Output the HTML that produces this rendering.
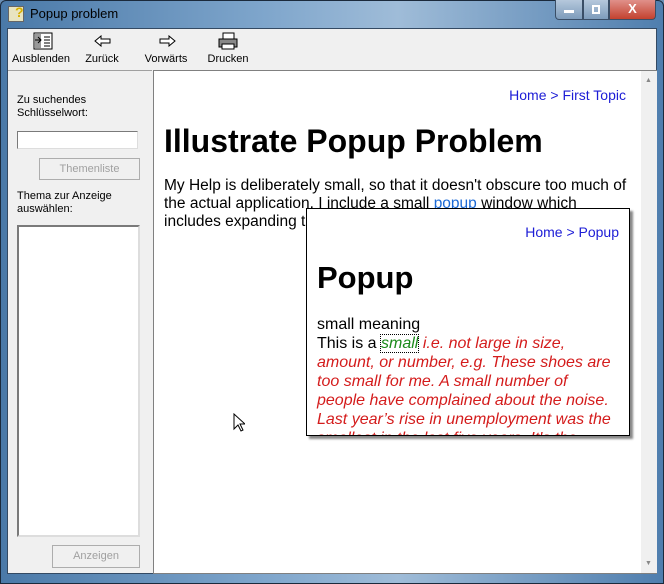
<!DOCTYPE html>
<html><head><style>
*{margin:0;padding:0;box-sizing:border-box}
body{width:664px;height:584px;overflow:hidden;background:#6a8fb5;font-family:"Liberation Sans",sans-serif;position:relative}
.frame{position:absolute;left:0;top:0;width:664px;height:584px;background:linear-gradient(90deg,#4a79a8 0%,#7fa6cc 40%,#9fbcd8 60%,#4f7eae 100%);border-radius:6px 6px 0 0;border:1px solid #1b2a3c}
.title{position:absolute;left:30px;top:6px;font-size:13px;color:#000}
.ico{position:absolute;left:8px;top:6px;width:16px;height:16px;background:#e8e4c0;border:1px solid #666}
.ico b{position:absolute;left:6px;top:-3px;color:#d8b000;font-size:14px;font-weight:bold}
.btns{position:absolute;top:0;left:555px;height:20px;display:flex}
.b{height:20px;border:1px solid #3a4e66;border-top:none;background:linear-gradient(#b5c8dc,#7e9cbb);}
.client{position:absolute;left:7px;top:28px;width:650px;height:546px;background:#f0f0f0;border:1px solid #344a63}
.tb{position:absolute;top:0;font-size:11px;color:#000;text-align:center}
.tb span{display:block;margin-top:24px}
.left{position:absolute;left:0;top:41px;width:144px;height:505px;border-top:1px solid #a0a0a0;font-size:11px}
.content{position:absolute;left:145px;top:41px;width:504px;height:504px;border:1px solid #808080;border-right:none;background:#fff}
.sb{position:absolute;right:0;top:0;width:16px;height:502px;background:#f0f0f0}
.lbl{position:absolute;left:9px;font-size:11px;line-height:13px;color:#000}
.dis{position:absolute;border:1px solid #adadad;background:#f0f0f0;color:#a0a0a0;font-size:11px;text-align:center;line-height:20px}
a{color:#1c1cd6;text-decoration:none}
</style></head><body>
<div class="frame"></div>
<div class="ico"><b>?</b></div>
<div class="title">Popup problem</div>
<div class="btns">
<div class="b" style="width:28px;border-radius:0 0 0 4px"><div style="margin:10px 8px 0;height:3px;background:#fff"></div></div>
<div class="b" style="width:26px"><div style="margin:5px 8px 0;height:9px;border:2px solid #fff"></div></div>
<div class="b" style="width:47px;background:linear-gradient(#e0908a,#c3422f);border-radius:0 0 4px 0;color:#fff;text-align:center;font-weight:bold;font-size:13px;line-height:18px">X</div>
</div>
<div class="client">
 <div class="tb" style="left:3px;width:60px"><svg style="position:absolute;left:22px;top:3px" width="20" height="18"><rect x="1" y="1" width="18" height="16" fill="#fff" stroke="#000"/><rect x="2" y="2" width="6" height="14" fill="#999"/><path d="M2 8h6M5 5l3 3-3 3" stroke="#000" fill="none"/><path d="M11 5h6M11 8h6M11 11h6M11 14h6" stroke="#000"/></svg><span>Ausblenden</span></div>
 <div class="tb" style="left:70px;width:48px"><svg style="position:absolute;left:16px;top:6px" width="18" height="12"><path d="M1 6l6-5v3h9v4h-9v3z" fill="#fff" stroke="#000"/></svg><span>Zurück</span></div>
 <div class="tb" style="left:134px;width:48px"><svg style="position:absolute;left:16px;top:6px" width="18" height="12"><path d="M17 6l-6-5v3h-9v4h9v3z" fill="#fff" stroke="#000"/></svg><span>Vorwärts</span></div>
 <div class="tb" style="left:196px;width:48px"><svg style="position:absolute;left:14px;top:3px" width="20" height="18"><rect x="5" y="1" width="11" height="7" fill="#fff" stroke="#000"/><rect x="1" y="7" width="18" height="8" fill="#888" stroke="#000"/><rect x="4" y="12" width="12" height="5" fill="#fff" stroke="#000"/></svg><span>Drucken</span></div>
 <div class="left">
  <div class="lbl" style="top:23px">Zu suchendes<br>Schlüsselwort:</div>
  <div style="position:absolute;left:9px;top:60px;width:121px;height:18px;background:#fff;border:1px solid #7a7a7a;border-right-color:#ddd;border-bottom-color:#ddd"></div>
  <div class="dis" style="left:31px;top:87px;width:101px;height:22px">Themenliste</div>
  <div class="lbl" style="top:119px">Thema zur Anzeige<br>auswählen:</div>
  <div style="position:absolute;left:9px;top:154px;width:123px;height:312px;background:#fff;border:2px solid #7a7a7a;border-right-color:#ddd;border-bottom-color:#ddd"></div>
  <div class="dis" style="left:44px;top:474px;width:88px;height:23px">Anzeigen</div>
 </div>
 <div class="content">
  <div class="sb"><div style="position:absolute;left:4px;top:6px;font-size:7px;color:#888">▲</div><div style="position:absolute;left:4px;bottom:6px;font-size:7px;color:#888">▼</div></div>
  <div style="position:absolute;right:31px;top:16px;font-size:14px"><a>Home &gt; First Topic</a></div>
  <div style="position:absolute;left:10px;top:52px;font-size:32px;font-weight:bold;color:#000">Illustrate Popup Problem</div>
  <div style="position:absolute;left:10px;top:106px;width:470px;font-size:15.5px;line-height:18px;color:#000">My Help is deliberately small, so that it doesn't obscure too much of the actual application. I include a small <a style="color:#1c6ad6;text-decoration:underline">popup</a> window which includes expanding text.</div>
  <div style="position:absolute;left:152px;top:137px;width:324px;height:228px;background:#fff;border:1px solid #000;box-shadow:3px 3px 2px #888;overflow:hidden">
   <div style="position:absolute;right:10px;top:15px;font-size:14px"><a>Home &gt; Popup</a></div>
   <div style="position:absolute;left:10px;top:51px;font-size:31px;font-weight:bold">Popup</div>
   <div style="position:absolute;left:10px;top:106px;width:297px;font-size:16px;line-height:19px">small meaning<br>This is a <i style="color:#1a8a1a;outline:1px dotted #000">small</i> <i style="color:#d41c1c">i.e. not large in size, amount, or number, e.g. These shoes are too small for me. A small number of people have complained about the noise. Last year’s rise in unemployment was the smallest in the last five years, It's the smallest</i></div>
  </div>
 </div>
</div>
<svg style="position:absolute;left:233px;top:413px" width="12" height="19"><path d="M1 1v15l4-4 3 6 2-1-3-6h5z" fill="#fff" stroke="#000"/></svg>
</body></html>
